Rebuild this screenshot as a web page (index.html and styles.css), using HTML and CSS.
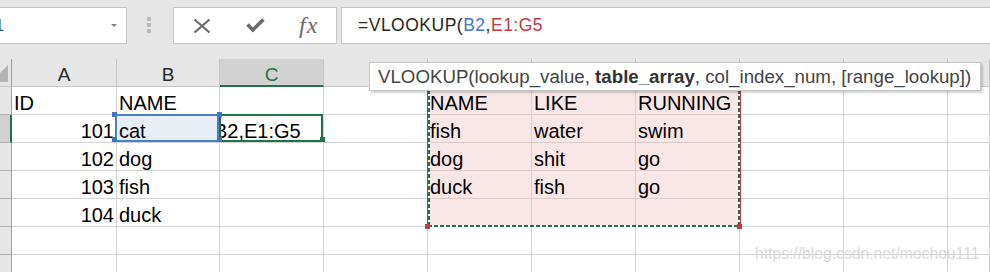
FILE: index.html
```html
<!DOCTYPE html>
<html lang="en">
<head>
    <meta charset="UTF-8">
    <meta name="viewport" content="width=device-width, initial-scale=1.0">
    <title>VLOOKUP</title>
    <link rel="stylesheet" href="styles.css">
</head>
<body>
    <div class="toolbar">
        <div class="namebox"><span class="name">1</span><span class="caret"></span></div>
        <div class="grip"><i></i><i></i><i></i></div>
        <div class="fxbox">
            <svg class="ico-x" width="18" height="16" viewBox="0 0 18 16"><path d="M1.5 1.5L16.5 14.5M16.5 1.5L1.5 14.5" stroke="#6b6b6b" stroke-width="2.2" fill="none"/></svg>
            <svg class="ico-ok" width="19" height="15" viewBox="0 0 19 15"><polyline points="1.5,6.5 6.8,12 17.5,1.5" stroke="#6b6b6b" stroke-width="3.6" fill="none"/></svg>
            <span class="fx">fx</span>
        </div>
        <div class="formula">=VLOOKUP(<span class="ref-b">B2</span>,<span class="ref-e">E1:G5</span></div>
    </div>

    <div class="sheet">
        <!-- column headers -->
        <div class="corner"><span class="tri"></span></div>
        <div class="ch">A</div><div class="ch">B</div><div class="ch on">C</div><div class="ch">D</div><div class="ch">E</div>
        <div class="ch">F</div><div class="ch">G</div><div class="ch">H</div><div class="ch">I</div><div class="ch">J</div>

        <!-- row 1 -->
        <div class="rh"></div>
        <div class="c">ID</div><div class="c">NAME</div><div class="c"></div><div class="c"></div>
        <div class="c ref">NAME</div><div class="c ref">LIKE</div><div class="c ref">RUNNING</div>
        <div class="c"></div><div class="c"></div><div class="c"></div>

        <!-- row 2 -->
        <div class="rh on"></div>
        <div class="c num">101</div>
        <div class="c sel">cat<span class="hd tl"></span><span class="hd tr"></span><span class="hd bl"></span><span class="hd br"></span></div>
        <div class="c act"><span class="edit">B2,E1:G5</span><span class="fill"></span></div>
        <div class="c"></div>
        <div class="c ref">fish</div><div class="c ref">water</div><div class="c ref">swim</div>
        <div class="c"></div><div class="c"></div><div class="c"></div>

        <!-- row 3 -->
        <div class="rh"></div>
        <div class="c num">102</div><div class="c">dog</div><div class="c"></div><div class="c"></div>
        <div class="c ref">dog</div><div class="c ref">shit</div><div class="c ref">go</div>
        <div class="c"></div><div class="c"></div><div class="c"></div>

        <!-- row 4 -->
        <div class="rh"></div>
        <div class="c num">103</div><div class="c">fish</div><div class="c"></div><div class="c"></div>
        <div class="c ref">duck</div><div class="c ref">fish</div><div class="c ref">go</div>
        <div class="c"></div><div class="c"></div><div class="c"></div>

        <!-- row 5 -->
        <div class="rh"></div>
        <div class="c num">104</div><div class="c">duck</div><div class="c"></div><div class="c"></div>
        <div class="c ref"></div><div class="c ref"></div><div class="c ref"></div>
        <div class="c"></div><div class="c"></div><div class="c"></div>

        <!-- row 6 -->
        <div class="rh"></div>
        <div class="c"></div><div class="c"></div><div class="c"></div><div class="c"></div><div class="c"></div>
        <div class="c"></div><div class="c"></div><div class="c"></div><div class="c"></div><div class="c"></div>

        <!-- row 7 -->
        <div class="rh"></div>
        <div class="c"></div><div class="c"></div><div class="c"></div><div class="c"></div><div class="c"></div>
        <div class="c"></div><div class="c"></div><div class="c"></div><div class="c"></div><div class="c"></div>

        <!-- referenced range E1:G5 -->
        <div class="range"><span class="dot dl"></span><span class="dot dr"></span></div>

        <div class="tip">VLOOKUP(lookup_value, <b>table_array</b>, col_index_num, [range_lookup])</div>

        <div class="mark">https://blog.csdn.net/mochou111</div>
    </div>
</body>
</html>
```

FILE: styles.css
```css
body {
    margin: 0;
    width: 990px;
    height: 272px;
    overflow: hidden;
    background-color: #fff;
    font-family: "Liberation Sans", Arial, sans-serif;
}

/* formula bar */
.toolbar {
    display: flex;
    align-items: flex-start;
    height: 59px;
    padding-top: 7px;
    box-sizing: border-box;
    background-color: #e6e6e6;
    overflow: hidden;
}
.namebox {
    display: flex;
    align-items: center;
    justify-content: space-between;
    width: 128px;
    height: 37px;
    margin-left: -1px;
    padding-right: 9px;
    box-sizing: border-box;
    border: 1px solid #c6c6c6;
    background-color: #fff;
    overflow: hidden;
}
.namebox .name {
    margin-left: -5px;
    font-size: 16px;
    color: #2b4a7a;
}
.caret {
    width: 0;
    height: 0;
    border-left: 3.5px solid transparent;
    border-right: 3.5px solid transparent;
    border-top: 3.5px solid #808080;
}
.grip {
    display: flex;
    flex-direction: column;
    gap: 2px;
    margin: 10px 0 0 20px;
}
.grip i {
    display: block;
    width: 4px;
    height: 4px;
    background-color: #b9b9b9;
}
.fxbox {
    display: flex;
    align-items: center;
    width: 164px;
    height: 37px;
    margin-left: 22px;
    padding-left: 19px;
    box-sizing: border-box;
    border: 1px solid #c6c6c6;
    background-color: #fff;
}
.ico-ok {
    margin-left: 35px;
}
.fx {
    margin-left: 34px;
    font-family: "Liberation Serif", "Times New Roman", serif;
    font-style: italic;
    font-size: 24px;
    letter-spacing: 1px;
    color: #6b6b6b;
}
.formula {
    flex: 1;
    display: flex;
    align-items: center;
    height: 37px;
    margin: 0 -10px 0 4px;
    padding-left: 16px;
    box-sizing: border-box;
    border: 1px solid #c6c6c6;
    background-color: #fff;
    font-size: 17.5px;
    letter-spacing: 0.5px;
    color: #262626;
    white-space: nowrap;
}
.ref-b {
    color: #3f78c8;
}
.ref-e {
    color: #c8363e;
}

/* grid */
.sheet {
    position: relative;
    display: grid;
    grid-template-columns: 12px 105px 103px 104px 104px 104px 104px 104px 104px 104px 1fr;
    grid-auto-rows: 28px;
    font-size: 20px;
    color: #000;
}
.corner {
    display: flex;
    justify-content: flex-end;
    align-items: flex-end;
    padding: 0 3px 4px 0;
    box-sizing: border-box;
    background-color: #e6e6e6;
    border-right: 1px solid #9e9e9e;
    border-bottom: 1px solid #c6c6c6;
    overflow: hidden;
}
.tri {
    flex: none;
    width: 0;
    height: 0;
    border-left: 17px solid transparent;
    border-bottom: 17px solid #b4b4b4;
}
.ch {
    padding-top: 6px;
    box-sizing: border-box;
    background-color: #e6e6e6;
    border-right: 1px solid #c6c6c6;
    border-bottom: 1px solid #c6c6c6;
    text-align: center;
    font-size: 19px;
    line-height: 20px;
    color: #262626;
}
.ch.on {
    background-color: #d2d2d2;
    color: #217346;
    border-bottom: 2px solid #217346;
}
.rh {
    background-color: #e6e6e6;
    border-right: 1px solid #9e9e9e;
    border-bottom: 1px solid #b0b0b0;
    box-sizing: border-box;
}
.rh.on {
    background-color: #d2d2d2;
    border-right: 2px solid #217346;
}
.c {
    padding: 6px 2px 0;
    box-sizing: border-box;
    border-right: 1px solid #d4d4d4;
    border-bottom: 1px solid #d4d4d4;
    line-height: 20px;
    white-space: nowrap;
}
.num {
    text-align: right;
}
.ref {
    background-color: #f9e7e7;
    border-color: #dccbcb;
}

/* selected B2 */
.sel {
    position: relative;
    background-color: #e8eef8;
}
.sel::after {
    content: "";
    position: absolute;
    inset: -1px 0 0 -2px;
    border: 2px solid #4a7ecf;
}
.hd {
    position: absolute;
    z-index: 1;
    width: 5px;
    height: 5px;
    background-color: #3f74c9;
}
.hd.tl { left: -5px; top: -3px; }
.hd.tr { right: -3px; top: -3px; }
.hd.bl { left: -5px; bottom: 0; }
.hd.br { right: -3px; bottom: 0; }

/* active C2 in edit mode */
.act {
    position: relative;
    padding-left: 0;
}
.act::after {
    content: "";
    position: absolute;
    inset: -1px 0 0 -1px;
    border: 2px solid #217346;
}
.act .edit {
    display: block;
    overflow: hidden;
    text-indent: -6px;
}
.act .fill {
    position: absolute;
    z-index: 1;
    right: -2px;
    bottom: 0;
    width: 5px;
    height: 5px;
    background-color: #217346;
}

/* marching ants round E1:G5 */
.range {
    position: absolute;
    left: 427px;
    top: 25px;
    width: 314px;
    height: 143px;
    box-sizing: border-box;
    border-left: 1px solid #c4373d;
    border-right: 1px solid #c4373d;
}
.range::after {
    content: "";
    position: absolute;
    inset: 0;
    background:
        repeating-linear-gradient(90deg, #217346 0 4px, #fff 4px 6px) left top / 100% 2px no-repeat,
        repeating-linear-gradient(90deg, #217346 0 4px, #fff 4px 6px) left bottom / 100% 2px no-repeat,
        repeating-linear-gradient(180deg, #217346 0 4px, #fff 4px 6px) left top / 2px 100% no-repeat,
        repeating-linear-gradient(180deg, #217346 0 4px, #fff 4px 6px) right top / 2px 100% no-repeat;
}
.dot {
    position: absolute;
    z-index: 1;
    bottom: -2px;
    width: 5px;
    height: 5px;
    background-color: #c4373d;
}
.dot.dl { left: -3px; }
.dot.dr { right: -2px; }

/* function tooltip */
.tip {
    position: absolute;
    left: 369px;
    top: 3px;
    width: 612px;
    height: 29px;
    padding-left: 8px;
    box-sizing: border-box;
    border: 1px solid #c6c6c6;
    background-color: #fff;
    box-shadow: 2px 2px 2px rgba(0, 0, 0, 0.18);
    font-size: 18.7px;
    line-height: 27px;
    color: #444;
    white-space: nowrap;
}
.tip b {
    color: #333;
}

.mark {
    position: absolute;
    left: 755px;
    top: 187px;
    font-size: 15.7px;
    line-height: 16px;
    color: #dadada;
}
```
